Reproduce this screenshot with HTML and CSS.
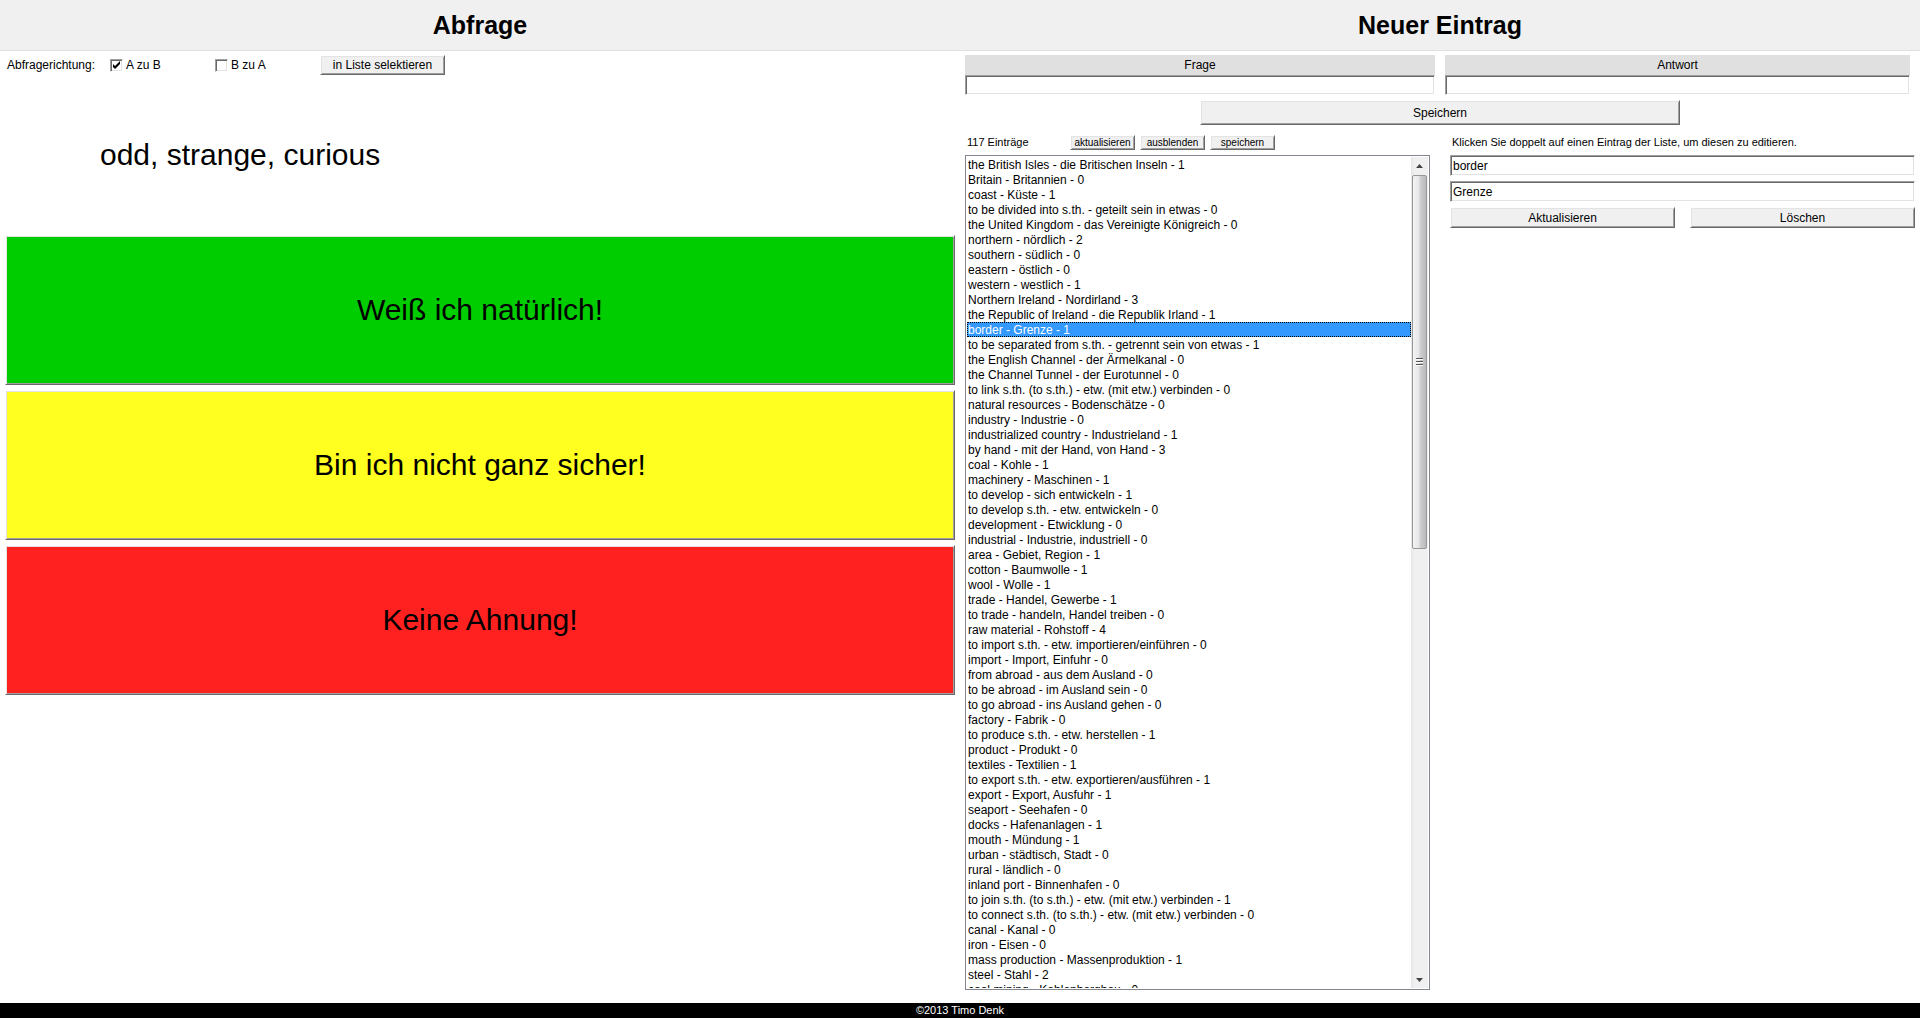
FILE: index.html
```html
<!DOCTYPE html>
<html lang="de">
<head>
<meta charset="utf-8">
<title>Vokabeltrainer</title>
<link rel="stylesheet" href="styles.css">
</head>
<body>
<header class="header">
  <h1 class="title">Abfrage</h1>
  <h1 class="title">Neuer Eintrag</h1>
</header>
<main class="main">
  <section class="quiz">
    <div class="options">
      <span class="direction">Abfragerichtung:</span>
      <label class="choice"><input class="check" type="checkbox" checked>A zu B</label>
      <label class="choice"><input class="check" type="checkbox">B zu A</label>
      <button class="btn btn-select" type="button">in Liste selektieren</button>
    </div>
    <p class="question">odd, strange, curious</p>
    <div class="answers">
      <button class="btn answer known" type="button">Weiß ich natürlich!</button>
      <button class="btn answer unsure" type="button">Bin ich nicht ganz sicher!</button>
      <button class="btn answer unknown" type="button">Keine Ahnung!</button>
    </div>
  </section>
  <section class="entries">
    <form class="new-entry">
      <div class="field">
        <label class="field-label" for="frage">Frage</label>
        <input class="text short" id="frage" type="text">
      </div>
      <div class="field">
        <label class="field-label" for="antwort">Antwort</label>
        <input class="text short" id="antwort" type="text">
      </div>
    </form>
    <button class="btn save" type="button">Speichern</button>
    <div class="manage">
      <div class="list-column">
        <div class="toolbar">
          <label class="count" for="liste">117 Einträge</label>
          <button class="btn mini" type="button">aktualisieren</button>
          <button class="btn mini" type="button">ausblenden</button>
          <button class="btn mini" type="button">speichern</button>
        </div>
        <div class="listbox">
          <select class="list" id="liste" size="56">
            <option>the British Isles - die Britischen Inseln - 1</option>
            <option>Britain - Britannien - 0</option>
            <option>coast - Küste - 1</option>
            <option>to be divided into s.th. - geteilt sein in etwas - 0</option>
            <option>the United Kingdom - das Vereinigte Königreich - 0</option>
            <option>northern - nördlich - 2</option>
            <option>southern - südlich - 0</option>
            <option>eastern - östlich - 0</option>
            <option>western - westlich - 1</option>
            <option>Northern Ireland - Nordirland - 3</option>
            <option>the Republic of Ireland - die Republik Irland - 1</option>
            <option selected>border - Grenze - 1</option>
            <option>to be separated from s.th. - getrennt sein von etwas - 1</option>
            <option>the English Channel - der Ärmelkanal - 0</option>
            <option>the Channel Tunnel - der Eurotunnel - 0</option>
            <option>to link s.th. (to s.th.) - etw. (mit etw.) verbinden - 0</option>
            <option>natural resources - Bodenschätze - 0</option>
            <option>industry - Industrie - 0</option>
            <option>industrialized country - Industrieland - 1</option>
            <option>by hand - mit der Hand, von Hand - 3</option>
            <option>coal - Kohle - 1</option>
            <option>machinery - Maschinen - 1</option>
            <option>to develop - sich entwickeln - 1</option>
            <option>to develop s.th. - etw. entwickeln - 0</option>
            <option>development - Etwicklung - 0</option>
            <option>industrial - Industrie, industriell - 0</option>
            <option>area - Gebiet, Region - 1</option>
            <option>cotton - Baumwolle - 1</option>
            <option>wool - Wolle - 1</option>
            <option>trade - Handel, Gewerbe - 1</option>
            <option>to trade - handeln, Handel treiben - 0</option>
            <option>raw material - Rohstoff - 4</option>
            <option>to import s.th. - etw. importieren/einführen - 0</option>
            <option>import - Import, Einfuhr - 0</option>
            <option>from abroad - aus dem Ausland - 0</option>
            <option>to be abroad - im Ausland sein - 0</option>
            <option>to go abroad - ins Ausland gehen - 0</option>
            <option>factory - Fabrik - 0</option>
            <option>to produce s.th. - etw. herstellen - 1</option>
            <option>product - Produkt - 0</option>
            <option>textiles - Textilien - 1</option>
            <option>to export s.th. - etw. exportieren/ausführen - 1</option>
            <option>export - Export, Ausfuhr - 1</option>
            <option>seaport - Seehafen - 0</option>
            <option>docks - Hafenanlagen - 1</option>
            <option>mouth - Mündung - 1</option>
            <option>urban - städtisch, Stadt - 0</option>
            <option>rural - ländlich - 0</option>
            <option>inland port - Binnenhafen - 0</option>
            <option>to join s.th. (to s.th.) - etw. (mit etw.) verbinden - 1</option>
            <option>to connect s.th. (to s.th.) - etw. (mit etw.) verbinden - 0</option>
            <option>canal - Kanal - 0</option>
            <option>iron - Eisen - 0</option>
            <option>mass production - Massenproduktion - 1</option>
            <option>steel - Stahl - 2</option>
            <option>coal mining - Kohlenbergbau - 0</option>
          </select>
          <div class="scrollbar" aria-hidden="true">
            <svg class="arrow" viewBox="0 0 17 17"><path d="M5 11L8.500 7L12 11Z" fill="#444"/></svg>
            <div class="track"><div class="thumb"><svg class="grip" viewBox="0 0 7 8"><path d="M0 .5H7M0 3.500H7M0 6.500H7" stroke="#555"/><path d="M0 1.500H7M0 4.500H7M0 7.500H7" stroke="#fff"/></svg></div></div>
            <svg class="arrow" viewBox="0 0 17 17"><path d="M5 7L8.500 11L12 7Z" fill="#444"/></svg>
          </div>
        </div>
      </div>
      <form class="editor">
        <p class="hint">Klicken Sie doppelt auf einen Eintrag der Liste, um diesen zu editieren.</p>
        <input class="text" type="text" value="border" aria-label="Frage bearbeiten">
        <input class="text" type="text" value="Grenze" aria-label="Antwort bearbeiten">
        <div class="editor-buttons">
          <button class="btn edit" type="button">Aktualisieren</button>
          <button class="btn edit" type="button">Löschen</button>
        </div>
      </form>
    </div>
  </section>
</main>
<footer class="footer">©2013 Timo Denk</footer>
</body>
</html>
```
FILE: styles.css
```css
* {
  box-sizing: border-box;
}

body {
  margin: 0;
  height: 100vh;
  display: flex;
  flex-direction: column;
  background: #fff;
  color: #000;
  font: 12px/15px "Liberation Sans", Arial, sans-serif;
}

.header {
  display: grid;
  grid-template-columns: 1fr 1fr;
  flex: none;
  background: #f0f0f0;
  border-bottom: 1px solid #e0e0e0;
}

.title {
  margin: 0;
  font-size: 25px;
  line-height: 50px;
  text-align: center;
}

.main {
  flex: 1;
  min-height: 0;
  display: grid;
  grid-template-columns: 1fr 1fr;
  grid-template-rows: minmax(0, 1fr);
  padding: 4px 0 13px;
}

/* controls with a two-tone bevel */
.btn {
  margin: 0;
  padding: 0;
  border: 1px solid;
  border-color: #fff #696969 #696969 #fff;
  border-radius: 0;
  box-shadow: inset 1px 1px #e3e3e3, inset -1px -1px #a0a0a0;
  background: #f0f0f0;
  color: #000;
  font: inherit;
}

.text {
  display: block;
  width: 100%;
  height: 21px;
  margin: 0;
  padding: 1px 2px;
  border: 1px solid;
  border-color: #a0a0a0 #fff #fff #a0a0a0;
  border-radius: 0;
  box-shadow: inset 1px 1px #696969, inset -1px -1px #e3e3e3;
  background: #fff;
  color: #000;
  font: inherit;
}

.short {
  height: 20px;
}

/* quiz */
.quiz {
  padding: 0 5px;
}

.options {
  display: flex;
  align-items: center;
  height: 20px;
}

.direction {
  width: 105px;
  padding-left: 2px;
}

.choice {
  display: flex;
  align-items: center;
  gap: 3px;
  width: 105px;
}

.check {
  appearance: none;
  width: 13px;
  height: 13px;
  margin: 0;
  border: 1px solid;
  border-color: #a0a0a0 #fff #fff #a0a0a0;
  box-shadow: inset 1px 1px #696969, inset -1px -1px #e3e3e3;
}

.check:checked {
  background: url("data:image/svg+xml,%3Csvg xmlns='http://www.w3.org/2000/svg' viewBox='0 0 11 11'%3E%3Cpath d='M2 4v3l2 2 5-5V1L4 6z'/%3E%3C/svg%3E");
}

.btn-select {
  width: 125px;
  height: 20px;
}

.question {
  margin: 60px 0;
  padding-left: 95px;
  font-size: 30px;
  line-height: 40px;
}

.answers {
  display: flex;
  flex-direction: column;
  gap: 5px;
}

.answer {
  height: 150px;
  padding-bottom: 2px;
  font-size: 30px;
}

.known {
  background: #00cd00;
}

.unsure {
  background: #ffff20;
}

.unknown {
  background: #ff2020;
}

/* entries */
.entries {
  display: flex;
  flex-direction: column;
  min-height: 0;
}

.new-entry {
  display: grid;
  grid-template-columns: 94fr 93fr;
  gap: 10px;
  padding: 0 10px 0 5px;
}

.field-label {
  display: block;
  background: #e0e0e0;
  line-height: 20px;
  text-align: center;
}

.save {
  flex: none;
  align-self: center;
  width: 50%;
  height: 25px;
  margin: 5px 0 10px;
  padding-top: 1px;
}

.manage {
  flex: 1;
  min-height: 0;
  display: grid;
  grid-template-columns: 1fr 1fr;
  grid-template-rows: minmax(0, 1fr);
  gap: 20px;
  padding: 0 5px;
}

.list-column {
  display: flex;
  flex-direction: column;
  min-height: 0;
}

.toolbar {
  display: flex;
  flex: none;
  gap: 5px;
  height: 15px;
  margin-bottom: 5px;
}

.count {
  width: 100px;
  padding-left: 2px;
  font-size: 11px;
}

.mini {
  width: 65px;
  height: 15px;
  font-size: 10px;
  line-height: 11px;
}

.listbox {
  display: flex;
  flex: 1;
  min-height: 0;
  padding: 1px;
  border: 1px solid #828790;
}

.list {
  flex: 1;
  min-width: 0;
  height: 100%;
  margin: 0;
  padding: 0;
  border: 0;
  border-radius: 0;
  outline: 0;
  background: #fff;
  color: #000;
  font: inherit;
  scrollbar-width: none;
}

.list option {
  height: 15px;
  min-height: 15px;
  padding: 1px 1px 0;
  line-height: 14px;
}

.list option:checked {
  background: linear-gradient(#3399ff, #3399ff);
  outline: 1px dotted #000;
  outline-offset: -1px;
  -webkit-text-fill-color: #fff;
}

.scrollbar {
  display: flex;
  flex-direction: column;
  width: 17px;
  background: linear-gradient(90deg, #e6e6e6, #f0f0f0 20%, #f0f0f0);
}

.arrow {
  display: block;
  flex: none;
  width: 17px;
  height: 17px;
}

.track {
  flex: 1;
  padding: 1px;
}

.thumb {
  display: flex;
  align-items: center;
  justify-content: center;
  height: 47%;
  border: 1px solid #979797;
  border-radius: 2px;
  background: linear-gradient(90deg, #f4f4f4, #e6e6e8 45%, #cfcfd2 55%, #b9b9bc);
}

.grip {
  width: 7px;
  height: 8px;
}

/* editor */
.editor {
  display: flex;
  flex-direction: column;
  gap: 5px;
}

.hint {
  margin: 0;
  padding-left: 2px;
  font-size: 11px;
}

.editor-buttons {
  display: grid;
  grid-template-columns: 1fr 1fr;
  gap: 15px;
}

.edit {
  height: 21px;
  padding-top: 1px;
}

.footer {
  flex: none;
  background: #000;
  color: #fff;
  font-size: 11px;
  text-align: center;
}
```
